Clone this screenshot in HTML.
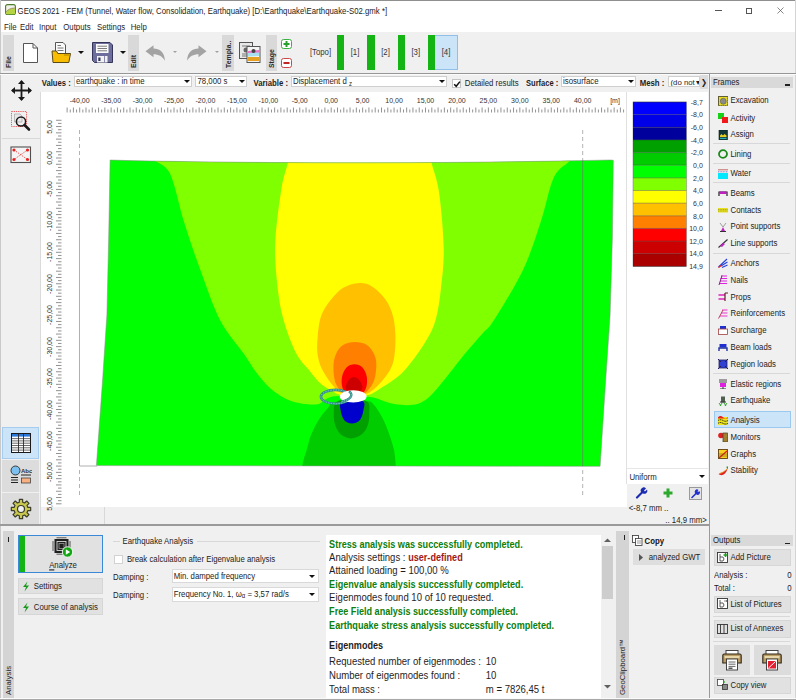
<!DOCTYPE html>
<html><head><meta charset="utf-8"><style>
*{box-sizing:border-box}
html,body{margin:0;padding:0}
body{width:796px;height:700px;overflow:hidden;position:relative;background:#f0f0f0;font-family:"Liberation Sans",sans-serif;font-size:7.8px;color:#1e1e1e}
.a{position:absolute}
.t{position:absolute;white-space:nowrap;line-height:10px;transform:scaleY(1.12)}
.b{font-weight:bold}
.tab{position:absolute;background:#d9d9d9}
.vt{position:absolute;white-space:nowrap;transform:rotate(-90deg);transform-origin:0 0;line-height:10px}
.combo{position:absolute;background:#fff;border:1px solid #cfcfcf}
.arr{position:absolute;width:0;height:0;border-left:3px solid transparent;border-right:3px solid transparent;border-top:3px solid #111}
.sep{position:absolute;height:1px;background:#d6d6d6}
.btn{position:absolute;background:#e1e1e1;border:1px solid #d8d8d8}
</style></head><body>
<div class="a" style="left:0px;top:0px;width:796px;height:32px;background:#fff;"></div>
<div class="a" style="left:0px;top:0px;width:796px;height:1px;background:#8f8f8f;"></div>
<div class="a" style="left:0px;top:0px;width:1px;height:700px;background:#c9c9c9;"></div>
<div class="a" style="left:795px;top:0px;width:1px;height:700px;background:#d4d4d4;"></div>
<svg class="a" style="left:4.8px;top:4.2px;" width="11" height="11" viewBox="0 0 11 11"><rect x="0.6" y="0.6" width="9.8" height="9.8" rx="2" fill="#f2f2ea" stroke="#4d7d2c" stroke-width="1.1"/><path d="M1 9.5V8C3 5.8 5 4.4 10 4.2V9.5Q10 10.2 9 10.2H2Q1 10.2 1 9.5Z" fill="#b4d444"/><path d="M1.2 7.8C3 5.6 5 4.2 9.8 4" fill="none" stroke="#8a6a40" stroke-width="0.7"/></svg>
<div class="t" style="left:17.6px;top:6.7px;font-size:7.8px;color:#222;">GEOS 2021 - FEM (Tunnel, Water flow, Consolidation, Earthquake) [D:\Earthquake\Earthquake-S02.gmk *]</div>
<div class="a" style="left:715px;top:10px;width:7px;height:1px;background:#555;"></div>
<div class="a" style="left:746px;top:7.5px;width:6px;height:6px;border:0.8px solid #555"></div>
<svg class="a" style="left:777px;top:7px;" width="7" height="7" viewBox="0 0 7 7"><path d="M0.5 0.5L6.5 6.5M6.5 0.5L0.5 6.5" stroke="#555" stroke-width="0.7"/></svg>
<div class="t" style="left:4px;top:22.7px;font-size:7.8px;">File</div>
<div class="t" style="left:20px;top:22.7px;font-size:7.8px;">Edit</div>
<div class="t" style="left:39px;top:22.7px;font-size:7.8px;">Input</div>
<div class="t" style="left:63.3px;top:22.7px;font-size:7.8px;">Outputs</div>
<div class="t" style="left:97px;top:22.7px;font-size:7.8px;">Settings</div>
<div class="t" style="left:130.7px;top:22.7px;font-size:7.8px;">Help</div>
<div class="a" style="left:0px;top:73px;width:796px;height:1px;background:#969696;"></div>
<div class="a" style="left:0px;top:74px;width:796px;height:1px;background:#fbfbfb;"></div>
<div class="a" style="left:2.6px;top:34.5px;width:11.4px;height:36px;background:#d9d9d9;"></div>
<div class="vt" style="left:4.100000000000001px;top:68px;font-size:6.9px;font-weight:bold;color:#2a2a2a">File</div>
<div class="a" style="left:128px;top:34.5px;width:11px;height:36px;background:#d9d9d9;"></div>
<div class="vt" style="left:129.3px;top:68px;font-size:6.9px;font-weight:bold;color:#2a2a2a">Edit</div>
<div class="a" style="left:222.2px;top:34.5px;width:11.400000000000006px;height:36px;background:#d9d9d9;"></div>
<div class="vt" style="left:223.7px;top:68px;font-size:6.9px;font-weight:bold;color:#2a2a2a">Templa..</div>
<div class="a" style="left:265.7px;top:34.5px;width:11.100000000000023px;height:36px;background:#d9d9d9;"></div>
<div class="vt" style="left:267.05px;top:68px;font-size:6.9px;font-weight:bold;color:#2a2a2a">Stage</div>
<svg class="a" style="left:22px;top:42px;" width="17" height="22" viewBox="0 0 17 22"><path d="M1.5 1.5H11L15.5 6V20.5H1.5Z" fill="#fff" stroke="#555" stroke-width="1"/><path d="M11 1.5V6H15.5" fill="none" stroke="#555" stroke-width="1"/></svg>
<svg class="a" style="left:51px;top:42px;" width="21" height="22" viewBox="0 0 21 22"><path d="M4.5 0.5H12L14.5 3V12H4.5Z" fill="#fafafa" stroke="#444" stroke-width="0.9"/><path d="M6.5 3.5H10M6.5 6H12.5M6.5 8.5H12.5" stroke="#555" stroke-width="0.8"/><path d="M1 9H5.5L6.8 11.5H19.5L17.8 20.5H2Z" fill="#f8bc00" stroke="#5a4a18" stroke-width="1"/><path d="M13 13H18" stroke="#a07800" stroke-width="0.8"/></svg>
<div class="a" style="left:78.4px;top:51.2px;width:0;height:0;border-left:3.0px solid transparent;border-right:3.0px solid transparent;border-top:3.0px solid #111"></div>
<svg class="a" style="left:92px;top:42px;" width="21" height="21" viewBox="0 0 21 21"><path d="M0.5 0.5H18L20.5 3V20.5H2.5L0.5 18.5Z" fill="#6e6e9c" stroke="#35355a" stroke-width="1"/><rect x="4" y="2" width="12.5" height="9" fill="#fbfbfb"/><path d="M5.5 4.2H15M5.5 6.5H15M5.5 8.8H15" stroke="#444" stroke-width="0.7"/><rect x="5" y="14" width="10.5" height="6.5" fill="#f2f2f2"/><rect x="6.3" y="15.5" width="2.2" height="3.5" fill="#35355a"/><path d="M12.5 14V20.5" stroke="#6e6e9c" stroke-width="0.8"/></svg>
<div class="a" style="left:119.5px;top:51.2px;width:0;height:0;border-left:3.0px solid transparent;border-right:3.0px solid transparent;border-top:3.0px solid #111"></div>
<svg class="a" style="left:145px;top:45px;" width="21" height="16" viewBox="0 0 21 16"><path d="M0.5 6.2L8.5 0.3V3.6C14.5 3.6 19.5 7 20 15.8C17.5 11.2 13.5 9.2 8.5 9.2V12.2Z" fill="#a3a3a3"/></svg>
<div class="a" style="left:173.1px;top:51.25px;width:0;height:0;border-left:2.5px solid transparent;border-right:2.5px solid transparent;border-top:2.5px solid #a0a0a0"></div>
<svg class="a" style="left:186px;top:45px;" width="21" height="16" viewBox="0 0 21 16"><path d="M20.5 6.2L12.5 0.3V3.6C6.5 3.6 1.5 7 1 15.8C3.5 11.2 7.5 9.2 12.5 9.2V12.2Z" fill="#a3a3a3"/></svg>
<div class="a" style="left:214.5px;top:51.25px;width:0;height:0;border-left:2.5px solid transparent;border-right:2.5px solid transparent;border-top:2.5px solid #a0a0a0"></div>
<svg class="a" style="left:239px;top:42px;" width="22" height="22" viewBox="0 0 22 22"><rect x="0.5" y="0.5" width="13" height="16" fill="#e8e8e8" stroke="#555"/><path d="M3 4H11M3 12H11M3 14H9" stroke="#777"/><circle cx="7" cy="8" r="2.5" fill="#666"/><rect x="8" y="4.5" width="13" height="16" fill="#f5f5f5" stroke="#555"/><path d="M9 9L20 8V12L9 13Z" fill="#e878c8"/><path d="M9 11L20 10.5V14L9 14.5Z" fill="#a8e0f0"/><rect x="9" y="15" width="11" height="4" fill="#e8a020"/><circle cx="14.5" cy="9" r="2" fill="#444"/></svg>
<svg class="a" style="left:280.5px;top:38.5px;" width="11" height="10" viewBox="0 0 11 10"><rect x="0.5" y="0.5" width="10" height="9" rx="2" fill="#fff" stroke="#3cb043" stroke-width="1"/><path d="M5.5 2V8M2.5 5H8.5" stroke="#28a030" stroke-width="2"/></svg>
<svg class="a" style="left:280.5px;top:57.5px;" width="11" height="10" viewBox="0 0 11 10"><rect x="0.5" y="0.5" width="10" height="9" rx="2" fill="#fff" stroke="#c84848" stroke-width="1"/><path d="M2.5 5H8.5" stroke="#c02828" stroke-width="2"/></svg>
<div class="t" style="left:220.5px;width:200px;text-align:center;top:48.300000000000004px;font-size:7.8px;color:#333">[Topo]</div>
<div class="a" style="left:336.8px;top:35px;width:7.5px;height:35px;background:#14b414;"></div>
<div class="t" style="left:255px;width:200px;text-align:center;top:48.300000000000004px;font-size:7.8px;color:#333">[1]</div>
<div class="a" style="left:367px;top:35px;width:7.5px;height:35px;background:#14b414;"></div>
<div class="t" style="left:285.5px;width:200px;text-align:center;top:48.300000000000004px;font-size:7.8px;color:#333">[2]</div>
<div class="a" style="left:397.5px;top:35px;width:7.5px;height:35px;background:#14b414;"></div>
<div class="t" style="left:315.8px;width:200px;text-align:center;top:48.300000000000004px;font-size:7.8px;color:#333">[3]</div>
<div class="a" style="left:434.8px;top:35px;width:23.2px;height:35px;background:#cce4f7;border:1px solid #90c0e8;border-left:none"></div>
<div class="a" style="left:427.5px;top:35px;width:7.5px;height:35px;background:#14b414;"></div>
<div class="t" style="left:346px;width:200px;text-align:center;top:48.300000000000004px;font-size:7.8px;color:#333">[4]</div>
<div class="a" style="left:40px;top:92px;width:1px;height:433px;background:#dadada;"></div>
<svg class="a" style="left:11px;top:80px;" width="21" height="21" viewBox="0 0 21 21"><path d="M10.5 1V20M1 10.5H20" stroke="#1a1a1a" stroke-width="1.8"/><path d="M10.5 0L7 4H14ZM10.5 21L7 17H14ZM0 10.5L4 7V14ZM21 10.5L17 7V14Z" fill="#1a1a1a"/></svg>
<svg class="a" style="left:10px;top:110px;" width="22" height="22" viewBox="0 0 22 22"><rect x="1.5" y="1.5" width="15" height="15" fill="none" stroke="#f06060" stroke-width="1" stroke-dasharray="1.3 0.9"/><path d="M4.5 4H10L12 6V12H4.5Z" fill="#e8e8e8" stroke="#999" stroke-width="0.6"/><circle cx="11" cy="11.5" r="4.6" fill="none" stroke="#1a1a1a" stroke-width="1.5"/><path d="M14.5 15L19 19.5" stroke="#1a1a1a" stroke-width="2.6" stroke-linecap="round"/></svg>
<div class="a" style="left:2px;top:137.5px;width:38px;height:1px;background:#d8d8d8;"></div>
<svg class="a" style="left:10px;top:146px;" width="22" height="18" viewBox="0 0 22 18"><rect x="1" y="1" width="19.5" height="15.5" fill="#f4f4f4" stroke="#505050" stroke-width="1.1"/><path d="M4 4L17.5 13.5M17.5 4L4 13.5" stroke="#e83030" stroke-width="0.9" stroke-dasharray="1.2 1.2"/><circle cx="4" cy="4" r="1.6" fill="#e82020"/><circle cx="17.5" cy="4" r="1.6" fill="#e82020"/><circle cx="4" cy="13.5" r="1.6" fill="#e82020"/><circle cx="17.5" cy="13.5" r="1.6" fill="#e82020"/></svg>
<div class="a" style="left:2.4px;top:427px;width:37px;height:31.5px;background:#cce4f7;border:1px solid #a6cdef"></div>
<svg class="a" style="left:11px;top:433px;" width="20" height="20" viewBox="0 0 20 20"><rect x="0.5" y="0.5" width="19" height="19" fill="#fff" stroke="#1a1a1a"/><rect x="1" y="1" width="18" height="2.6" fill="#2a78d8"/><path d="M1 5.6H19M1 7.9H19M1 10.2H19M1 12.5H19M1 14.8H19M1 17.1H19" stroke="#2a2a2a" stroke-width="0.7"/><path d="M7.5 1V19M12.5 1V19" stroke="#2a2a2a" stroke-width="0.9"/></svg>
<div class="a" style="left:2.4px;top:460px;width:37px;height:31.5px;background:#dcdcdc;"></div>
<svg class="a" style="left:10px;top:465px;" width="22" height="22" viewBox="0 0 22 22"><circle cx="5.5" cy="5.5" r="4.5" fill="#7cc0f0" stroke="#2a2a2a" stroke-width="0.9"/><text x="11" y="8" font-size="6" font-family="Liberation Sans" font-weight="bold" fill="#333">Abc</text><path d="M11 10H21M1 12.5H8M1 15H8M1 17.5H8" stroke="#222" stroke-width="1.2"/><rect x="11.5" y="13" width="9" height="5" fill="#f8b080" stroke="#444" stroke-width="0.8"/></svg>
<div class="a" style="left:2.4px;top:493px;width:37px;height:31.5px;background:#dcdcdc;"></div>
<svg class="a" style="left:10px;top:498px;" width="22" height="22" viewBox="0 0 22 22"><polygon points="9.31,4.21 9.39,1.33 12.61,1.33 12.69,4.21 14.61,5.00 16.70,3.03 18.97,5.30 17.00,7.39 17.79,9.31 20.67,9.39 20.67,12.61 17.79,12.69 17.00,14.61 18.97,16.70 16.70,18.97 14.61,17.00 12.69,17.79 12.61,20.67 9.39,20.67 9.31,17.79 7.39,17.00 5.30,18.97 3.03,16.70 5.00,14.61 4.21,12.69 1.33,12.61 1.33,9.39 4.21,9.31 5.00,7.39 3.03,5.30 5.30,3.03 7.39,5.00" fill="#c9c84e" stroke="#3c3c2c" stroke-width="1.2" stroke-linejoin="round"/><circle cx="11" cy="11" r="3.5" fill="#f0f0f0" stroke="#3c3c2c" stroke-width="1.2"/></svg>
<div class="t" style="left:41.7px;top:79.4px;font-size:7.7px;font-weight:bold;">Values :</div>
<div class="combo" style="left:74px;top:76px;width:118px;height:11px"></div>
<div class="t" style="left:76px;top:77.4px;font-size:7.8px;">earthquake : in time</div>
<div class="a" style="left:184.0px;top:80.0px;width:0;height:0;border-left:3.0px solid transparent;border-right:3.0px solid transparent;border-top:3.0px solid #111"></div>
<div class="combo" style="left:195.4px;top:76px;width:52px;height:11px"></div>
<div class="t" style="left:197.5px;top:77.4px;font-size:7.8px;">78,000 s</div>
<div class="a" style="left:239.0px;top:80.0px;width:0;height:0;border-left:3.0px solid transparent;border-right:3.0px solid transparent;border-top:3.0px solid #111"></div>
<div class="t" style="left:253.5px;top:79.4px;font-size:7.75px;font-weight:bold;">Variable :</div>
<div class="combo" style="left:291px;top:76px;width:156px;height:11px"></div>
<div class="t" style="left:293px;top:77.4px;font-size:7.8px;">Displacement d <span style="font-size:6px;position:relative;top:1.5px">z</span></div>
<div class="a" style="left:439.0px;top:80.0px;width:0;height:0;border-left:3.0px solid transparent;border-right:3.0px solid transparent;border-top:3.0px solid #111"></div>
<div class="a" style="left:451.7px;top:78.8px;width:9.5px;height:9.5px;background:#fff;border:1px solid #c4c4c4"></div>
<svg class="a" style="left:452.5px;top:79.5px;" width="8" height="8" viewBox="0 0 8 8"><path d="M1.2 4.2L3.2 6.3L6.9 1.6" fill="none" stroke="#111" stroke-width="1.5"/></svg>
<div class="t" style="left:464.8px;top:79.3px;font-size:7.8px;">Detailed results</div>
<div class="t" style="left:526px;top:79.4px;font-size:7.55px;font-weight:bold;">Surface :</div>
<div class="combo" style="left:561px;top:76px;width:75px;height:11px"></div>
<div class="t" style="left:563px;top:77.4px;font-size:7.8px;">isosurface</div>
<div class="a" style="left:627.7px;top:80.0px;width:0;height:0;border-left:3.0px solid transparent;border-right:3.0px solid transparent;border-top:3.0px solid #111"></div>
<div class="t" style="left:639.7px;top:79.4px;font-size:7.8px;font-weight:bold;">Mesh :</div>
<div class="combo" style="left:668px;top:76px;width:32px;height:11px;overflow:hidden"><span style="position:absolute;left:1.5px;top:0.5px;line-height:10px;white-space:nowrap">(do not</span><span style="position:absolute;left:27px;top:0.5px;line-height:10px;">▾</span></div>
<div class="a" style="left:699.5px;top:75px;width:8px;height:14px;background:#dcdcdc;"></div>
<div class="t" style="left:701px;top:77.7px;font-size:7.5px;">❯</div>
<div class="a" style="left:41px;top:92px;width:586px;height:414.5px;background:#fff;"></div>
<div class="a" style="left:103.5px;top:506.5px;width:1px;height:18px;background:#d8d8d8;"></div>
<div class="t" style="left:-20.30000000000001px;width:200px;text-align:center;top:95.7px;font-size:7.0px;color:#333">-40,00</div>
<div class="t" style="left:11.137499999999989px;width:200px;text-align:center;top:95.7px;font-size:7.0px;color:#333">-35,00</div>
<div class="t" style="left:42.57499999999999px;width:200px;text-align:center;top:95.7px;font-size:7.0px;color:#333">-30,00</div>
<div class="t" style="left:74.01249999999999px;width:200px;text-align:center;top:95.7px;font-size:7.0px;color:#333">-25,00</div>
<div class="t" style="left:105.44999999999999px;width:200px;text-align:center;top:95.7px;font-size:7.0px;color:#333">-20,00</div>
<div class="t" style="left:136.8875px;width:200px;text-align:center;top:95.7px;font-size:7.0px;color:#333">-15,00</div>
<div class="t" style="left:168.325px;width:200px;text-align:center;top:95.7px;font-size:7.0px;color:#333">-10,00</div>
<div class="t" style="left:199.7625px;width:200px;text-align:center;top:95.7px;font-size:7.0px;color:#333">-5,00</div>
<div class="t" style="left:231.2px;width:200px;text-align:center;top:95.7px;font-size:7.0px;color:#333">0,00</div>
<div class="t" style="left:262.6375px;width:200px;text-align:center;top:95.7px;font-size:7.0px;color:#333">5,00</div>
<div class="t" style="left:294.075px;width:200px;text-align:center;top:95.7px;font-size:7.0px;color:#333">10,00</div>
<div class="t" style="left:325.5125px;width:200px;text-align:center;top:95.7px;font-size:7.0px;color:#333">15,00</div>
<div class="t" style="left:356.95px;width:200px;text-align:center;top:95.7px;font-size:7.0px;color:#333">20,00</div>
<div class="t" style="left:388.3875px;width:200px;text-align:center;top:95.7px;font-size:7.0px;color:#333">25,00</div>
<div class="t" style="left:419.82500000000005px;width:200px;text-align:center;top:95.7px;font-size:7.0px;color:#333">30,00</div>
<div class="t" style="left:451.26250000000005px;width:200px;text-align:center;top:95.7px;font-size:7.0px;color:#333">35,00</div>
<div class="t" style="left:482.70000000000005px;width:200px;text-align:center;top:95.7px;font-size:7.0px;color:#333">40,00</div>
<div class="t" style="left:515px;width:200px;text-align:center;top:95.7px;font-size:7.0px;color:#333">[m]</div>
<svg class="a" style="left:0px;top:0px;pointer-events:none" width="640" height="120" viewBox="0 0 640 120"><path d="M67.12 107.5V112.5 M70.27 109.5V112.5 M73.41 107.5V112.5 M76.56 109.5V112.5 M79.70 107.5V112.5 M82.84 109.5V112.5 M85.99 107.5V112.5 M89.13 109.5V112.5 M92.28 107.5V112.5 M95.42 109.5V112.5 M98.56 107.5V112.5 M101.71 109.5V112.5 M104.85 107.5V112.5 M107.99 109.5V112.5 M111.14 107.5V112.5 M114.28 109.5V112.5 M117.43 107.5V112.5 M120.57 109.5V112.5 M123.71 107.5V112.5 M126.86 109.5V112.5 M130.00 107.5V112.5 M133.14 109.5V112.5 M136.29 107.5V112.5 M139.43 109.5V112.5 M142.57 107.5V112.5 M145.72 109.5V112.5 M148.86 107.5V112.5 M152.01 109.5V112.5 M155.15 107.5V112.5 M158.29 109.5V112.5 M161.44 107.5V112.5 M164.58 109.5V112.5 M167.72 107.5V112.5 M170.87 109.5V112.5 M174.01 107.5V112.5 M177.16 109.5V112.5 M180.30 107.5V112.5 M183.44 109.5V112.5 M186.59 107.5V112.5 M189.73 109.5V112.5 M192.88 107.5V112.5 M196.02 109.5V112.5 M199.16 107.5V112.5 M202.31 109.5V112.5 M205.45 107.5V112.5 M208.59 109.5V112.5 M211.74 107.5V112.5 M214.88 109.5V112.5 M218.02 107.5V112.5 M221.17 109.5V112.5 M224.31 107.5V112.5 M227.46 109.5V112.5 M230.60 107.5V112.5 M233.74 109.5V112.5 M236.89 107.5V112.5 M240.03 109.5V112.5 M243.18 107.5V112.5 M246.32 109.5V112.5 M249.46 107.5V112.5 M252.61 109.5V112.5 M255.75 107.5V112.5 M258.89 109.5V112.5 M262.04 107.5V112.5 M265.18 109.5V112.5 M268.32 107.5V112.5 M271.47 109.5V112.5 M274.61 107.5V112.5 M277.76 109.5V112.5 M280.90 107.5V112.5 M284.04 109.5V112.5 M287.19 107.5V112.5 M290.33 109.5V112.5 M293.48 107.5V112.5 M296.62 109.5V112.5 M299.76 107.5V112.5 M302.91 109.5V112.5 M306.05 107.5V112.5 M309.19 109.5V112.5 M312.34 107.5V112.5 M315.48 109.5V112.5 M318.62 107.5V112.5 M321.77 109.5V112.5 M324.91 107.5V112.5 M328.06 109.5V112.5 M331.20 107.5V112.5 M334.34 109.5V112.5 M337.49 107.5V112.5 M340.63 109.5V112.5 M343.77 107.5V112.5 M346.92 109.5V112.5 M350.06 107.5V112.5 M353.21 109.5V112.5 M356.35 107.5V112.5 M359.49 109.5V112.5 M362.64 107.5V112.5 M365.78 109.5V112.5 M368.92 107.5V112.5 M372.07 109.5V112.5 M375.21 107.5V112.5 M378.36 109.5V112.5 M381.50 107.5V112.5 M384.64 109.5V112.5 M387.79 107.5V112.5 M390.93 109.5V112.5 M394.07 107.5V112.5 M397.22 109.5V112.5 M400.36 107.5V112.5 M403.51 109.5V112.5 M406.65 107.5V112.5 M409.79 109.5V112.5 M412.94 107.5V112.5 M416.08 109.5V112.5 M419.22 107.5V112.5 M422.37 109.5V112.5 M425.51 107.5V112.5 M428.66 109.5V112.5 M431.80 107.5V112.5 M434.94 109.5V112.5 M438.09 107.5V112.5 M441.23 109.5V112.5 M444.38 107.5V112.5 M447.52 109.5V112.5 M450.66 107.5V112.5 M453.81 109.5V112.5 M456.95 107.5V112.5 M460.09 109.5V112.5 M463.24 107.5V112.5 M466.38 109.5V112.5 M469.52 107.5V112.5 M472.67 109.5V112.5 M475.81 107.5V112.5 M478.96 109.5V112.5 M482.10 107.5V112.5 M485.24 109.5V112.5 M488.39 107.5V112.5 M491.53 109.5V112.5 M494.67 107.5V112.5 M497.82 109.5V112.5 M500.96 107.5V112.5 M504.11 109.5V112.5 M507.25 107.5V112.5 M510.39 109.5V112.5 M513.54 107.5V112.5 M516.68 109.5V112.5 M519.83 107.5V112.5 M522.97 109.5V112.5 M526.11 107.5V112.5 M529.26 109.5V112.5 M532.40 107.5V112.5 M535.54 109.5V112.5 M538.69 107.5V112.5 M541.83 109.5V112.5 M544.97 107.5V112.5 M548.12 109.5V112.5 M551.26 107.5V112.5 M554.41 109.5V112.5 M557.55 107.5V112.5 M560.69 109.5V112.5 M563.84 107.5V112.5 M566.98 109.5V112.5 M570.12 107.5V112.5 M573.27 109.5V112.5 M576.41 107.5V112.5 M579.56 109.5V112.5 M582.70 107.5V112.5 M585.84 109.5V112.5 M588.99 107.5V112.5 M592.13 109.5V112.5 M595.27 107.5V112.5 M598.42 109.5V112.5 M601.56 107.5V112.5 M604.71 109.5V112.5 M607.85 107.5V112.5 M610.99 109.5V112.5 M614.14 107.5V112.5 M617.28 109.5V112.5 M620.42 107.5V112.5 M623.57 109.5V112.5" stroke="#777" stroke-width="0.8"/></svg>
<div class="t" style="left:20px;top:121.5625px;width:60px;text-align:center;font-size:7px;color:#333;transform:rotate(-90deg)">5,00</div>
<div class="t" style="left:20px;top:153.0px;width:60px;text-align:center;font-size:7px;color:#333;transform:rotate(-90deg)">0,00</div>
<div class="t" style="left:20px;top:184.4375px;width:60px;text-align:center;font-size:7px;color:#333;transform:rotate(-90deg)">-5,00</div>
<div class="t" style="left:20px;top:215.875px;width:60px;text-align:center;font-size:7px;color:#333;transform:rotate(-90deg)">-10,00</div>
<div class="t" style="left:20px;top:247.3125px;width:60px;text-align:center;font-size:7px;color:#333;transform:rotate(-90deg)">-15,00</div>
<div class="t" style="left:20px;top:278.75px;width:60px;text-align:center;font-size:7px;color:#333;transform:rotate(-90deg)">-20,00</div>
<div class="t" style="left:20px;top:310.1875px;width:60px;text-align:center;font-size:7px;color:#333;transform:rotate(-90deg)">-25,00</div>
<div class="t" style="left:20px;top:341.625px;width:60px;text-align:center;font-size:7px;color:#333;transform:rotate(-90deg)">-30,00</div>
<div class="t" style="left:20px;top:373.0625px;width:60px;text-align:center;font-size:7px;color:#333;transform:rotate(-90deg)">-35,00</div>
<div class="t" style="left:20px;top:404.5px;width:60px;text-align:center;font-size:7px;color:#333;transform:rotate(-90deg)">-40,00</div>
<div class="t" style="left:20px;top:435.9375px;width:60px;text-align:center;font-size:7px;color:#333;transform:rotate(-90deg)">-45,00</div>
<div class="t" style="left:20px;top:467.375px;width:60px;text-align:center;font-size:7px;color:#333;transform:rotate(-90deg)">-50,00</div>
<div class="t" style="left:20px;top:498.8125px;width:60px;text-align:center;font-size:7px;color:#333;transform:rotate(-90deg)">5,00</div>
<svg class="a" style="left:0px;top:0px;" width="70" height="520" viewBox="0 0 70 520"><path d="M56 120.28H61.5 M58 123.42H61.5 M56 126.56H61.5 M58 129.71H61.5 M56 132.85H61.5 M58 135.99H61.5 M56 139.14H61.5 M58 142.28H61.5 M56 145.43H61.5 M58 148.57H61.5 M56 151.71H61.5 M58 154.86H61.5 M56 158.00H61.5 M58 161.14H61.5 M56 164.29H61.5 M58 167.43H61.5 M56 170.57H61.5 M58 173.72H61.5 M56 176.86H61.5 M58 180.01H61.5 M56 183.15H61.5 M58 186.29H61.5 M56 189.44H61.5 M58 192.58H61.5 M56 195.72H61.5 M58 198.87H61.5 M56 202.01H61.5 M58 205.16H61.5 M56 208.30H61.5 M58 211.44H61.5 M56 214.59H61.5 M58 217.73H61.5 M56 220.88H61.5 M58 224.02H61.5 M56 227.16H61.5 M58 230.31H61.5 M56 233.45H61.5 M58 236.59H61.5 M56 239.74H61.5 M58 242.88H61.5 M56 246.02H61.5 M58 249.17H61.5 M56 252.31H61.5 M58 255.46H61.5 M56 258.60H61.5 M58 261.74H61.5 M56 264.89H61.5 M58 268.03H61.5 M56 271.18H61.5 M58 274.32H61.5 M56 277.46H61.5 M58 280.61H61.5 M56 283.75H61.5 M58 286.89H61.5 M56 290.04H61.5 M58 293.18H61.5 M56 296.32H61.5 M58 299.47H61.5 M56 302.61H61.5 M58 305.76H61.5 M56 308.90H61.5 M58 312.04H61.5 M56 315.19H61.5 M58 318.33H61.5 M56 321.48H61.5 M58 324.62H61.5 M56 327.76H61.5 M58 330.91H61.5 M56 334.05H61.5 M58 337.19H61.5 M56 340.34H61.5 M58 343.48H61.5 M56 346.62H61.5 M58 349.77H61.5 M56 352.91H61.5 M58 356.06H61.5 M56 359.20H61.5 M58 362.34H61.5 M56 365.49H61.5 M58 368.63H61.5 M56 371.77H61.5 M58 374.92H61.5 M56 378.06H61.5 M58 381.21H61.5 M56 384.35H61.5 M58 387.49H61.5 M56 390.64H61.5 M58 393.78H61.5 M56 396.92H61.5 M58 400.07H61.5 M56 403.21H61.5 M58 406.36H61.5 M56 409.50H61.5 M58 412.64H61.5 M56 415.79H61.5 M58 418.93H61.5 M56 422.07H61.5 M58 425.22H61.5 M56 428.36H61.5 M58 431.51H61.5 M56 434.65H61.5 M58 437.79H61.5 M56 440.94H61.5 M58 444.08H61.5 M56 447.22H61.5 M58 450.37H61.5 M56 453.51H61.5 M58 456.66H61.5 M56 459.80H61.5 M58 462.94H61.5 M56 466.09H61.5 M58 469.23H61.5 M56 472.38H61.5 M58 475.52H61.5 M56 478.66H61.5 M58 481.81H61.5 M56 484.95H61.5 M58 488.09H61.5 M56 491.24H61.5 M58 494.38H61.5 M56 497.52H61.5 M58 500.67H61.5 M56 503.81H61.5" stroke="#777" stroke-width="0.8"/></svg>
<svg class="a" style="left:0px;top:0px;" width="640" height="520" viewBox="0 0 640 520"><defs><clipPath id="cm"><path d="M110.10 160.00 L130.00 160.62 L150.00 160.99 L170.00 161.33 L190.00 161.63 L210.00 161.89 L230.00 162.13 L250.00 162.33 L270.00 162.49 L290.00 162.62 L310.00 162.71 L330.00 162.77 L350.00 162.80 L370.00 162.79 L390.00 162.75 L410.00 162.67 L430.00 162.56 L450.00 162.41 L470.00 162.23 L490.00 162.02 L510.00 161.77 L530.00 161.48 L550.00 161.16 L570.00 160.81 L590.00 160.42 L610.00 160.00 L613.30 160.20 L612.40 237.00 L610.10 315.00 L605.50 383.00 L600.10 466.30 L96.40 465.60 L102.40 383.00 L106.90 315.00 L108.70 237.00Z"/></clipPath></defs><path d="M110.10 160.00 L130.00 160.62 L150.00 160.99 L170.00 161.33 L190.00 161.63 L210.00 161.89 L230.00 162.13 L250.00 162.33 L270.00 162.49 L290.00 162.62 L310.00 162.71 L330.00 162.77 L350.00 162.80 L370.00 162.79 L390.00 162.75 L410.00 162.67 L430.00 162.56 L450.00 162.41 L470.00 162.23 L490.00 162.02 L510.00 161.77 L530.00 161.48 L550.00 161.16 L570.00 160.81 L590.00 160.42 L610.00 160.00 L613.30 160.20 L612.40 237.00 L610.10 315.00 L605.50 383.00 L600.10 466.30 L96.40 465.60 L102.40 383.00 L106.90 315.00 L108.70 237.00Z" fill="#00ff00"/><g clip-path="url(#cm)"><path d="M154.40 150.00C85.07 151.67 151.80 156.07 154.40 160.00C157.00 163.93 165.07 163.27 170.00 173.60C174.93 183.93 179.00 206.10 184.00 222.00C189.00 237.90 194.00 252.67 200.00 269.00C206.00 285.33 212.67 305.83 220.00 320.00C227.33 334.17 238.00 345.33 244.00 354.00C250.00 362.67 251.50 366.17 256.00 372.00C260.50 377.83 265.17 384.17 271.00 389.00C276.83 393.83 283.50 398.42 291.00 401.00C298.50 403.58 309.83 405.00 316.00 404.50C322.17 404.00 324.00 399.42 328.00 398.00C332.00 396.58 333.00 396.17 340.00 396.00C347.00 395.83 361.33 395.75 370.00 397.00C378.67 398.25 384.83 402.20 392.00 403.50C399.17 404.80 407.00 405.72 413.00 404.80C419.00 403.88 422.67 402.30 428.00 398.00C433.33 393.70 438.75 386.50 445.00 379.00C451.25 371.50 459.17 360.67 465.50 353.00C471.83 345.33 478.25 338.50 483.00 333.00C487.75 327.50 487.33 330.50 494.00 320.00C500.67 309.50 515.17 286.50 523.00 270.00C530.83 253.50 535.83 236.50 541.00 221.00C546.17 205.50 549.10 187.17 554.00 177.00C558.90 166.83 567.67 164.50 570.40 160.00C573.13 155.50 639.73 151.67 570.40 150.00C501.07 148.33 223.73 148.33 154.40 150.00Z" fill="#80ff00"/><path d="M288.00 150.00C264.12 152.00 289.07 155.72 288.00 162.00C286.93 168.28 283.72 174.53 281.60 187.70C279.48 200.87 276.07 225.28 275.30 241.00C274.53 256.72 275.72 269.17 277.00 282.00C278.28 294.83 279.83 306.17 283.00 318.00C286.17 329.83 291.67 344.33 296.00 353.00C300.33 361.67 305.00 365.00 309.00 370.00C313.00 375.00 316.17 379.50 320.00 383.00C323.83 386.50 328.33 389.00 332.00 391.00C335.67 393.00 336.33 394.23 342.00 395.00C347.67 395.77 359.50 396.77 366.00 395.60C372.50 394.43 374.83 391.93 381.00 388.00C387.17 384.07 395.72 379.50 403.00 372.00C410.28 364.50 419.27 351.67 424.70 343.00C430.13 334.33 432.88 329.17 435.60 320.00C438.32 310.83 439.65 300.00 441.00 288.00C442.35 276.00 444.03 264.00 443.70 248.00C443.37 232.00 441.07 206.42 439.00 192.00C436.93 177.58 432.58 168.50 431.30 161.50C430.02 154.50 455.18 151.92 431.30 150.00C407.42 148.08 311.88 148.00 288.00 150.00Z" fill="#ffff00"/><path d="M366.30 283.80C372.28 285.52 378.65 291.48 382.90 296.20C387.15 300.92 389.73 306.10 391.80 312.10C393.87 318.10 394.85 325.05 395.30 332.20C395.75 339.35 395.38 348.70 394.50 355.00C393.62 361.30 392.92 364.75 390.00 370.00C387.08 375.25 381.00 382.50 377.00 386.50C373.00 390.50 370.17 392.25 366.00 394.00C361.83 395.75 356.67 397.50 352.00 397.00C347.33 396.50 342.67 395.03 338.00 391.00C333.33 386.97 327.33 378.47 324.00 372.80C320.67 367.13 319.08 362.63 318.00 357.00C316.92 351.37 316.92 346.00 317.50 339.00C318.08 332.00 318.78 322.13 321.50 315.00C324.22 307.87 329.55 301.05 333.80 296.20C338.05 291.35 341.58 287.97 347.00 285.90C352.42 283.83 360.32 282.08 366.30 283.80Z" fill="#ffc000"/><path d="M355.00 342.00C359.00 342.00 363.75 342.83 367.00 345.00C370.25 347.17 372.95 351.33 374.50 355.00C376.05 358.67 376.55 362.33 376.30 367.00C376.05 371.67 375.38 378.33 373.00 383.00C370.62 387.67 366.50 393.00 362.00 395.00C357.50 397.00 350.33 396.83 346.00 395.00C341.67 393.17 338.10 388.67 336.00 384.00C333.90 379.33 333.40 372.00 333.40 367.00C333.40 362.00 334.40 357.67 336.00 354.00C337.60 350.33 339.83 347.00 343.00 345.00C346.17 343.00 351.00 342.00 355.00 342.00Z" fill="#ff8000"/><path d="M354.50 364.30C357.17 364.30 360.45 365.38 362.50 367.50C364.55 369.62 366.22 373.58 366.80 377.00C367.38 380.42 367.13 385.00 366.00 388.00C364.87 391.00 363.00 393.83 360.00 395.00C357.00 396.17 350.92 396.17 348.00 395.00C345.08 393.83 343.50 391.00 342.50 388.00C341.50 385.00 341.33 380.42 342.00 377.00C342.67 373.58 344.42 369.62 346.50 367.50C348.58 365.38 351.83 364.30 354.50 364.30Z" fill="#ff0000"/><path d="M354.00 377.00C356.00 377.00 358.67 379.00 360.00 381.00C361.33 383.00 363.00 386.83 362.00 389.00C361.00 391.17 356.67 394.00 354.00 394.00C351.33 394.00 347.00 391.17 346.00 389.00C345.00 386.83 346.67 383.00 348.00 381.00C349.33 379.00 352.00 377.00 354.00 377.00Z" fill="#cc0000"/><path d="M301.00 472.00C301.33 470.33 302.07 465.67 303.00 462.00C303.93 458.33 305.27 454.50 306.60 450.00C307.93 445.50 309.00 440.00 311.00 435.00C313.00 430.00 315.93 424.33 318.60 420.00C321.27 415.67 324.10 412.00 327.00 409.00C329.90 406.00 329.50 403.33 336.00 402.00C342.50 400.67 359.58 400.42 366.00 401.00C372.42 401.58 371.58 402.33 374.50 405.50C377.42 408.67 381.00 415.08 383.50 420.00C386.00 424.92 387.75 430.00 389.50 435.00C391.25 440.00 393.00 445.50 394.00 450.00C395.00 454.50 395.17 458.33 395.50 462.00C395.83 465.67 395.92 470.33 396.00 472.00Z" fill="#00cc00"/><path d="M351.00 438.40C354.42 438.40 358.75 436.57 361.50 434.50C364.25 432.43 366.20 429.42 367.50 426.00C368.80 422.58 369.55 418.17 369.30 414.00C369.05 409.83 371.22 403.17 366.00 401.00C360.78 398.83 343.37 398.83 338.00 401.00C332.63 403.17 334.22 409.83 333.80 414.00C333.38 418.17 334.30 422.58 335.50 426.00C336.70 429.42 338.42 432.43 341.00 434.50C343.58 436.57 347.58 438.40 351.00 438.40Z" fill="#00a000"/><path d="M352.00 423.50C354.50 423.50 357.62 422.58 359.50 420.50C361.38 418.42 362.80 414.25 363.30 411.00C363.80 407.75 366.05 402.67 362.50 401.00C358.95 399.33 345.62 399.33 342.00 401.00C338.38 402.67 340.38 407.75 340.80 411.00C341.22 414.25 342.63 418.42 344.50 420.50C346.37 422.58 349.50 423.50 352.00 423.50Z" fill="#0000cc"/></g><path d="M110.10 160.00 L130.00 160.62 L150.00 160.99 L170.00 161.33 L190.00 161.63 L210.00 161.89 L230.00 162.13 L250.00 162.33 L270.00 162.49 L290.00 162.62 L310.00 162.71 L330.00 162.77 L350.00 162.80 L370.00 162.79 L390.00 162.75 L410.00 162.67 L430.00 162.56 L450.00 162.41 L470.00 162.23 L490.00 162.02 L510.00 161.77 L530.00 161.48 L550.00 161.16 L570.00 160.81 L590.00 160.42 L610.00 160.00 L613.30 160.20 L612.40 237.00 L610.10 315.00 L605.50 383.00 L600.10 466.30 L96.40 465.60 L102.40 383.00 L106.90 315.00 L108.70 237.00Z" fill="none" stroke="#8a8a8a" stroke-width="0.5"/><path d="M79.5 158V466H97" fill="none" stroke="#b0b0b0" stroke-width="1"/><path d="M582.7 160V466.2" fill="none" stroke="#6a7a6a" stroke-width="0.7"/><path d="M79.5 130V158M79.5 470V496M582.7 130V160M582.7 470V496" fill="none" stroke="#aaaaaa" stroke-width="0.9" stroke-dasharray="4 3"/><ellipse cx="335.5" cy="396.8" rx="14.6" ry="6.9" fill="none" stroke="#34908e" stroke-width="2.6"/><ellipse cx="335.5" cy="396.8" rx="14.6" ry="6.9" fill="none" stroke="#8acfc8" stroke-width="0.9" stroke-dasharray="1.4 1.2"/><ellipse cx="353.2" cy="396.4" rx="13.4" ry="6.2" fill="#fff"/><path d="M341.5 401.5A14.6 6.9 0 0 0 349 391.3" fill="none" stroke="#34908e" stroke-width="2.4"/><path d="M341.5 401.5A14.6 6.9 0 0 0 349 391.3" fill="none" stroke="#a8e0d8" stroke-width="0.8" stroke-dasharray="1.2 1.2"/></svg>
<div class="a" style="left:626.5px;top:91.5px;width:81.5px;height:377px;background:#fff;"></div>
<div class="a" style="left:626px;top:91.5px;width:1px;height:392px;background:#e0e0e0;"></div>
<div class="a" style="left:626.5px;top:468px;width:81.5px;height:1px;background:#e6e6e6;"></div>
<svg class="a" style="left:0px;top:0px;" width="720" height="300" viewBox="0 0 720 300"><rect x="633" y="102.00" width="53.4" height="12.65" fill="#0000ff"/><rect x="633" y="114.65" width="53.4" height="12.65" fill="#0000e8"/><rect x="633" y="127.29" width="53.4" height="12.65" fill="#00009c"/><rect x="633" y="139.94" width="53.4" height="12.65" fill="#00a000"/><rect x="633" y="152.58" width="53.4" height="12.65" fill="#00cc00"/><rect x="633" y="165.23" width="53.4" height="12.65" fill="#00ff00"/><rect x="633" y="177.88" width="53.4" height="12.65" fill="#80ff00"/><rect x="633" y="190.52" width="53.4" height="12.65" fill="#ffff00"/><rect x="633" y="203.17" width="53.4" height="12.65" fill="#ffc000"/><rect x="633" y="215.82" width="53.4" height="12.65" fill="#ff8000"/><rect x="633" y="228.46" width="53.4" height="12.65" fill="#ff0000"/><rect x="633" y="241.11" width="53.4" height="12.65" fill="#cc0000"/><rect x="633" y="253.75" width="53.4" height="12.65" fill="#aa0000"/><path d="M633 102.00H686.4" stroke="#333" stroke-opacity="0.55" stroke-width="0.7"/><path d="M633 114.65H686.4" stroke="#333" stroke-opacity="0.55" stroke-width="0.7"/><path d="M633 127.29H686.4" stroke="#333" stroke-opacity="0.55" stroke-width="0.7"/><path d="M633 139.94H686.4" stroke="#333" stroke-opacity="0.55" stroke-width="0.7"/><path d="M633 152.58H686.4" stroke="#333" stroke-opacity="0.55" stroke-width="0.7"/><path d="M633 165.23H686.4" stroke="#333" stroke-opacity="0.55" stroke-width="0.7"/><path d="M633 177.88H686.4" stroke="#333" stroke-opacity="0.55" stroke-width="0.7"/><path d="M633 190.52H686.4" stroke="#333" stroke-opacity="0.55" stroke-width="0.7"/><path d="M633 203.17H686.4" stroke="#333" stroke-opacity="0.55" stroke-width="0.7"/><path d="M633 215.82H686.4" stroke="#333" stroke-opacity="0.55" stroke-width="0.7"/><path d="M633 228.46H686.4" stroke="#333" stroke-opacity="0.55" stroke-width="0.7"/><path d="M633 241.11H686.4" stroke="#333" stroke-opacity="0.55" stroke-width="0.7"/><path d="M633 253.75H686.4" stroke="#333" stroke-opacity="0.55" stroke-width="0.7"/><path d="M633 266.40H686.4" stroke="#333" stroke-opacity="0.55" stroke-width="0.7"/><rect x="633" y="102.0" width="53.4" height="164.39999999999998" fill="none" stroke="#333" stroke-opacity="0.5" stroke-width="0.6"/></svg>
<div class="t" style="left:402.79999999999995px;width:300px;text-align:right;top:97.7px;font-size:7.0px;color:#333">-8,7</div>
<div class="t" style="left:402.79999999999995px;width:300px;text-align:right;top:110.34615384615385px;font-size:7.0px;color:#333">-8,0</div>
<div class="t" style="left:402.79999999999995px;width:300px;text-align:right;top:122.99230769230769px;font-size:7.0px;color:#333">-6,0</div>
<div class="t" style="left:402.79999999999995px;width:300px;text-align:right;top:135.6384615384615px;font-size:7.0px;color:#333">-4,0</div>
<div class="t" style="left:402.79999999999995px;width:300px;text-align:right;top:148.28461538461536px;font-size:7.0px;color:#333">-2,0</div>
<div class="t" style="left:402.79999999999995px;width:300px;text-align:right;top:160.93076923076922px;font-size:7.0px;color:#333">0,0</div>
<div class="t" style="left:402.79999999999995px;width:300px;text-align:right;top:173.57692307692304px;font-size:7.0px;color:#333">2,0</div>
<div class="t" style="left:402.79999999999995px;width:300px;text-align:right;top:186.2230769230769px;font-size:7.0px;color:#333">4,0</div>
<div class="t" style="left:402.79999999999995px;width:300px;text-align:right;top:198.86923076923074px;font-size:7.0px;color:#333">6,0</div>
<div class="t" style="left:402.79999999999995px;width:300px;text-align:right;top:211.5153846153846px;font-size:7.0px;color:#333">8,0</div>
<div class="t" style="left:402.79999999999995px;width:300px;text-align:right;top:224.16153846153844px;font-size:7.0px;color:#333">10,0</div>
<div class="t" style="left:402.79999999999995px;width:300px;text-align:right;top:236.80769230769226px;font-size:7.0px;color:#333">12,0</div>
<div class="t" style="left:402.79999999999995px;width:300px;text-align:right;top:249.45384615384611px;font-size:7.0px;color:#333">14,0</div>
<div class="t" style="left:402.79999999999995px;width:300px;text-align:right;top:262.09999999999997px;font-size:7.0px;color:#333">14,9</div>
<div class="a" style="left:626.5px;top:469px;width:81.5px;height:14.5px;background:#fff;"></div>
<div class="t" style="left:629.4px;top:472.7px;font-size:7.8px;">Uniform</div>
<div class="a" style="left:698.7px;top:475.0px;width:0;height:0;border-left:3.0px solid transparent;border-right:3.0px solid transparent;border-top:3.0px solid #111"></div>
<svg class="a" style="left:635px;top:487px;" width="13" height="12" viewBox="0 0 13 12"><path d="M2 10.5L7.5 5" stroke="#1c2cb0" stroke-width="2.2" stroke-linecap="round"/><path d="M6.5 5.5A3 3 0 0 1 11 1.5L9 3.5L10 4.5L12 2.5A3 3 0 0 1 8 6.5Z" fill="#1c2cb0"/></svg>
<svg class="a" style="left:662px;top:487px;" width="12" height="12" viewBox="0 0 12 12"><path d="M6 1.5V10.5M1.5 6H10.5" stroke="#2ea82e" stroke-width="3"/></svg>
<svg class="a" style="left:688.5px;top:487px;" width="13" height="13" viewBox="0 0 13 13"><rect x="0.5" y="0.5" width="12" height="12" fill="#e4e4e4" stroke="#999"/><path d="M3 10.5L7 6.5" stroke="#2030d0" stroke-width="1.6" stroke-linecap="round"/><path d="M6.5 6.5A2.2 2.2 0 0 1 9.5 3L8.5 4.3L9.2 5L10.3 4A2.2 2.2 0 0 1 7.2 7.2Z" fill="#2030d0"/></svg>
<div class="t" style="left:628.8px;top:504.09999999999997px;font-size:7.8px;color:#222;">&lt;-8,7 mm ..</div>
<div class="t" style="left:406.70000000000005px;width:300px;text-align:right;top:516.0px;font-size:7.8px;color:#222">.. 14,9 mm&gt;</div>
<div class="a" style="left:708.5px;top:74px;width:1px;height:626px;background:#9a9a9a;"></div>
<div class="a" style="left:710.6px;top:76.5px;width:82.6px;height:11.2px;background:#d9d9d9;"></div>
<div class="t" style="left:713px;top:78.3px;font-size:7.8px;color:#222;">Frames</div>
<div class="a" style="left:785px;top:84px;width:5px;height:1.6px;background:#222;"></div>
<div class="a" style="left:713px;top:143.4px;width:77px;height:1px;background:#d8d8d8;"></div>
<div class="a" style="left:713px;top:162.5px;width:77px;height:1px;background:#d8d8d8;"></div>
<div class="a" style="left:713px;top:182.3px;width:77px;height:1px;background:#d8d8d8;"></div>
<div class="a" style="left:713px;top:252.7px;width:77px;height:1px;background:#d8d8d8;"></div>
<div class="a" style="left:713px;top:372.9px;width:77px;height:1px;background:#d8d8d8;"></div>
<div class="a" style="left:713.6px;top:410.6px;width:77px;height:17px;background:#cce4f7;border:1px solid #99c9ef"></div>
<div class="t" style="left:730.5px;top:96.2px;font-size:7.8px;color:#222;">Excavation</div>
<svg class="a" style="left:718px;top:95.5px;" width="10" height="10" viewBox="0 0 10 10"><rect x="0.5" y="0.5" width="9.5" height="9.5" fill="#e8dc20" stroke="#222" stroke-width="1"/><rect x="0.5" y="0.5" width="9.5" height="9.5" fill="none" stroke="#f8f060" stroke-width="0.6" stroke-dasharray="1 1"/><circle cx="5.25" cy="5.25" r="3" fill="#8a8a8a" stroke="#555" stroke-width="0.5"/></svg>
<div class="t" style="left:730.5px;top:113.60000000000001px;font-size:7.8px;color:#222;">Activity</div>
<svg class="a" style="left:718px;top:112.9px;" width="10" height="10" viewBox="0 0 10 10"><rect x="0" y="0" width="6" height="6" fill="#18d018"/><rect x="4" y="4" width="6" height="6" fill="#f01818"/></svg>
<div class="t" style="left:730.5px;top:130.2px;font-size:7.8px;color:#222;">Assign</div>
<svg class="a" style="left:718px;top:129.5px;" width="10" height="10" viewBox="0 0 10 10"><rect x="1" y="0" width="8.5" height="10.5" fill="#123838" stroke="#0a2020" stroke-width="0.6"/><path d="M2 5.5L3.5 4L5 5.5L6.5 4L8.5 5.5V7H2Z" fill="#e8d020"/><path d="M2 8.3H8.5" stroke="#30d0d0" stroke-width="1"/></svg>
<div class="t" style="left:730.5px;top:149.79999999999998px;font-size:7.8px;color:#222;">Lining</div>
<svg class="a" style="left:718px;top:149.1px;" width="10" height="10" viewBox="0 0 10 10"><ellipse cx="5" cy="5" rx="4" ry="3.8" fill="none" stroke="#1a8a1a" stroke-width="1.8"/></svg>
<div class="t" style="left:730.5px;top:169.2px;font-size:7.8px;color:#222;">Water</div>
<svg class="a" style="left:718px;top:168.5px;" width="10" height="10" viewBox="0 0 10 10"><path d="M0 0.8H10" stroke="#b03030" stroke-width="0.7"/><path d="M0 2.8H10" stroke="#3030a0" stroke-width="0.6" stroke-dasharray="1 0.6"/><rect x="0" y="4" width="10" height="6" fill="#00e8ff"/></svg>
<div class="t" style="left:730.5px;top:188.79999999999998px;font-size:7.8px;color:#222;">Beams</div>
<svg class="a" style="left:718px;top:188.1px;" width="10" height="10" viewBox="0 0 10 10"><path d="M1 8V4H9V8" fill="none" stroke="#202020" stroke-width="1.2"/><rect x="1.5" y="3.5" width="7" height="2.5" fill="#c020c0"/></svg>
<div class="t" style="left:730.5px;top:205.5px;font-size:7.8px;color:#222;">Contacts</div>
<svg class="a" style="left:718px;top:204.8px;" width="10" height="10" viewBox="0 0 10 10"><rect x="0" y="3" width="10" height="4.5" fill="#e8e020"/><path d="M0 4.5H10M0 6H10" stroke="#808020" stroke-width="0.6" stroke-dasharray="1 0.7"/></svg>
<div class="t" style="left:730.5px;top:222.39999999999998px;font-size:7.8px;color:#222;">Point supports</div>
<svg class="a" style="left:718px;top:221.7px;" width="10" height="10" viewBox="0 0 10 10"><path d="M2 1L5 5L8 1" stroke="#888" fill="none" stroke-width="0.8"/><path d="M3 9L5 5L7 9Z" fill="#c020c0"/><path d="M2 9.5H8" stroke="#333"/></svg>
<div class="t" style="left:730.5px;top:239.1px;font-size:7.8px;color:#222;">Line supports</div>
<svg class="a" style="left:718px;top:238.4px;" width="10" height="10" viewBox="0 0 10 10"><path d="M0.5 9.5L9.5 1.5" stroke="#333" stroke-width="1.2"/><path d="M2 8L5 5L7 6L4 9Z" fill="#c020c0"/></svg>
<div class="t" style="left:730.5px;top:258.9px;font-size:7.8px;color:#222;">Anchors</div>
<svg class="a" style="left:718px;top:258.2px;" width="10" height="10" viewBox="0 0 10 10"><path d="M0.5 9L9 1M3 8L9.5 4M4 9.5L9.5 7" stroke="#2040e0" stroke-width="1.1"/><path d="M0.5 9.5L4 7" stroke="#e02020" stroke-width="1.2"/></svg>
<div class="t" style="left:730.5px;top:275.59999999999997px;font-size:7.8px;color:#222;">Nails</div>
<svg class="a" style="left:718px;top:274.9px;" width="10" height="10" viewBox="0 0 10 10"><path d="M3 1H9M2.5 3.5H9M2 6H9M1.5 8.5H9" stroke="#e020e0" stroke-width="1.1"/><path d="M1 10L4 0.5" stroke="#802080" stroke-width="1"/></svg>
<div class="t" style="left:730.5px;top:292.8px;font-size:7.8px;color:#222;">Props</div>
<svg class="a" style="left:718px;top:292.1px;" width="10" height="10" viewBox="0 0 10 10"><path d="M0.5 3H7M0.5 7H7" stroke="#e020c0" stroke-width="1.5"/><path d="M7 1V9" stroke="#602020" stroke-width="1.2"/><path d="M7 1H10" stroke="#602020"/></svg>
<div class="t" style="left:730.5px;top:309.2px;font-size:7.8px;color:#222;">Reinforcements</div>
<svg class="a" style="left:718px;top:308.5px;" width="10" height="10" viewBox="0 0 10 10"><path d="M4 1H9.5M3 4H9.5M2 7H9.5" stroke="#f030d0" stroke-width="1.1"/><path d="M0.5 9.5L5 1" stroke="#c04060" stroke-width="1"/></svg>
<div class="t" style="left:730.5px;top:325.9px;font-size:7.8px;color:#222;">Surcharge</div>
<svg class="a" style="left:718px;top:325.2px;" width="10" height="10" viewBox="0 0 10 10"><rect x="2" y="1" width="6" height="3" fill="#2030d0"/><rect x="0.5" y="4" width="9" height="5.5" fill="#fff" stroke="#a04040" stroke-width="0.8"/></svg>
<div class="t" style="left:730.5px;top:343.3px;font-size:7.8px;color:#222;">Beam loads</div>
<svg class="a" style="left:718px;top:342.6px;" width="10" height="10" viewBox="0 0 10 10"><rect x="1.5" y="1" width="7" height="3.5" fill="#2030d0"/><path d="M1 8V5H9V8" fill="none" stroke="#2030a0" stroke-width="1.4"/></svg>
<div class="t" style="left:730.5px;top:359.9px;font-size:7.8px;color:#222;">Region loads</div>
<svg class="a" style="left:718px;top:359.2px;" width="10" height="10" viewBox="0 0 10 10"><rect x="1" y="1" width="8" height="8" fill="#3040d0" stroke="#202060" stroke-width="0.8"/><path d="M0 0L3 3M10 0L7 3M0 10L3 7M10 10L7 7" stroke="#202060"/></svg>
<div class="t" style="left:730.5px;top:379.59999999999997px;font-size:7.8px;color:#222;">Elastic regions</div>
<svg class="a" style="left:718px;top:378.9px;" width="10" height="10" viewBox="0 0 10 10"><path d="M1 1H9M1 3H9" stroke="#333" stroke-width="0.9"/><rect x="2" y="4" width="6" height="4" fill="#e020e0"/><path d="M5 8V10M2 10H8" stroke="#333"/></svg>
<div class="t" style="left:730.5px;top:396.2px;font-size:7.8px;color:#222;">Earthquake</div>
<svg class="a" style="left:718px;top:395.5px;" width="10" height="10" viewBox="0 0 10 10"><rect x="3" y="0.5" width="4" height="6" fill="#506050"/><path d="M1 7L3 10M4 7L2 10M6 7L8 10M9 7L7 10" stroke="#20a020" stroke-width="0.9"/><path d="M2 6H8" stroke="#333"/></svg>
<div class="t" style="left:730.5px;top:415.59999999999997px;font-size:7.8px;color:#222;">Analysis</div>
<svg class="a" style="left:718px;top:414.9px;" width="10" height="10" viewBox="0 0 10 10"><rect x="0" y="2" width="10" height="8" fill="#f0e818"/><path d="M0 2.2Q2.5 0 5 2.2T10 2.2V3.5H0Z" fill="#e82020"/><path d="M0 5.5Q2.5 4 5 5.5T10 5.5M0 8.3Q2.5 6.8 5 8.3T10 8.3" fill="none" stroke="#1a1a1a" stroke-width="1" stroke-dasharray="1.3 0.6"/></svg>
<div class="t" style="left:730.5px;top:432.8px;font-size:7.8px;color:#222;">Monitors</div>
<svg class="a" style="left:718px;top:432.1px;" width="10" height="10" viewBox="0 0 10 10"><circle cx="3" cy="3.5" r="2.8" fill="#e02020"/><rect x="5" y="1" width="4.5" height="9" fill="#a08030" stroke="#404020" stroke-width="0.7"/></svg>
<div class="t" style="left:730.5px;top:449.59999999999997px;font-size:7.8px;color:#222;">Graphs</div>
<svg class="a" style="left:718px;top:448.9px;" width="10" height="10" viewBox="0 0 10 10"><rect x="0.5" y="0.5" width="9" height="9" fill="#f8d020" stroke="#604010" stroke-width="0.9"/><path d="M1 9L9 2" stroke="#e02020" stroke-width="1.2"/><path d="M1 5H9M1 7H9" stroke="#604010" stroke-width="0.5"/></svg>
<div class="t" style="left:730.5px;top:466.2px;font-size:7.8px;color:#222;">Stability</div>
<svg class="a" style="left:718px;top:465.5px;" width="10" height="10" viewBox="0 0 10 10"><path d="M0.5 8C3 10.5 8 9 9.5 2.5C7 5 4 6.5 0.5 8Z" fill="#e02020"/><path d="M9.5 2.5L9 0.5" stroke="#208020" stroke-width="1.2"/><path d="M1.5 7.5C4 7 6.5 5.5 9 3" stroke="#f0a020" stroke-width="0.8" fill="none"/></svg>
<div class="a" style="left:0px;top:524.3px;width:709px;height:1.6px;background:#9a9a9a;"></div>
<div class="a" style="left:2.8px;top:530.6px;width:11.2px;height:169.4px;background:#d4d4d4;"></div>
<div class="a" style="left:7.5px;top:537px;width:1.5px;height:5px;background:#222;"></div>
<div class="vt" style="left:4.199999999999999px;top:695px;font-size:7.8px;color:#222">Analysis</div>
<div class="a" style="left:18px;top:535px;width:84.5px;height:37.8px;background:#e1e1e1;border:1px solid #3c88d8"></div>
<div class="a" style="left:18.5px;top:535.5px;width:6.5px;height:36.8px;background:#14b414;"></div>
<svg class="a" style="left:52px;top:537px;" width="22" height="21" viewBox="0 0 22 21"><rect x="2.5" y="2" width="14" height="14" fill="#1e1e1e"/><path d="M1 4V14M18 4V14M4.5 0.8H14.5M4.5 17.2H14.5" stroke="#555" stroke-width="1"/><rect x="5" y="4.5" width="9" height="9" fill="none" stroke="#d8d8d8" stroke-width="0.9"/><rect x="7" y="6.5" width="5" height="5" fill="none" stroke="#999" stroke-width="0.8"/><circle cx="15.5" cy="15" r="5.2" fill="#12a812" stroke="#fff" stroke-width="0.9"/><path d="M13.8 12.3V17.7L18.2 15Z" fill="#fff"/></svg>
<div class="t" style="left:-37px;width:200px;text-align:center;top:561.1px;font-size:7.8px;color:#222"><u>A</u>nalyze</div>
<div class="a" style="left:18px;top:577.6px;width:84.5px;height:16.199999999999932px;background:#e1e1e1;border:1px solid #d6d6d6"></div>
<svg class="a" style="left:22px;top:580.5px;" width="8" height="11" viewBox="0 0 8 11"><path d="M5.5 0.5L1 6H4L2.5 10.5L7 4.5H4Z" fill="#1a9a1a"/></svg>
<div class="t" style="left:33.8px;top:581.7px;font-size:7.8px;color:#222;">Settings</div>
<div class="a" style="left:18px;top:598.4px;width:84.5px;height:16.700000000000045px;background:#e1e1e1;border:1px solid #d6d6d6"></div>
<svg class="a" style="left:22px;top:601.8px;" width="8" height="11" viewBox="0 0 8 11"><path d="M5.5 0.5L1 6H4L2.5 10.5L7 4.5H4Z" fill="#1a9a1a"/></svg>
<div class="t" style="left:33.8px;top:603.0px;font-size:7.8px;color:#222;">Course of analysis</div>
<div class="a" style="left:113px;top:540.9px;width:7px;height:1px;background:#d8d8d8;"></div>
<div class="t" style="left:122.5px;top:536.7px;font-size:7.8px;color:#222;">Earthquake Analysis</div>
<div class="a" style="left:196.8px;top:540.9px;width:123px;height:1px;background:#d8d8d8;"></div>
<div class="a" style="left:113.9px;top:554.5px;width:9.5px;height:9.5px;background:#fff;border:1px solid #d2d2d2"></div>
<div class="t" style="left:126.9px;top:554.5px;font-size:7.8px;color:#222;">Break calculation after Eigenvalue analysis</div>
<div class="t" style="left:113px;top:572.7px;font-size:7.8px;color:#222;">Damping :</div>
<div class="combo" style="left:171.7px;top:569px;width:147.5px;height:14px;border-color:#d9d9d9"></div>
<div class="t" style="left:173.7px;top:571.7px;font-size:7.8px;color:#222;">Min. damped frequency</div>
<div class="a" style="left:309.4px;top:574.5px;width:0;height:0;border-left:3.0px solid transparent;border-right:3.0px solid transparent;border-top:3.0px solid #111"></div>
<div class="t" style="left:113px;top:590.9000000000001px;font-size:7.8px;color:#222;">Damping :</div>
<div class="combo" style="left:171.7px;top:587px;width:147.5px;height:14.5px;border-color:#d9d9d9"></div>
<div class="t" style="left:173.7px;top:590.0px;font-size:7.8px;color:#222;">Frequency No. 1, ω<span style="font-size:6px;position:relative;top:1px">α</span> = 3,57 rad/s</div>
<div class="a" style="left:309.4px;top:592.8px;width:0;height:0;border-left:3.0px solid transparent;border-right:3.0px solid transparent;border-top:3.0px solid #111"></div>
<div class="a" style="left:325.9px;top:534.8px;width:275.5px;height:163px;background:#fff;"></div>
<div class="t" style="left:329.1px;top:539.5px;font-size:9.55px;color:#1e1e1e;"><span style="color:#0d800d;font-weight:bold;font-size:9.1px">Stress analysis was successfully completed.</span></div>
<div class="t" style="left:329.1px;top:553.1px;font-size:9.55px;color:#1e1e1e;">Analysis settings : <span style="color:#a01818;font-weight:bold;font-size:9.1px">user-defined</span></div>
<div class="t" style="left:329.1px;top:566.3000000000001px;font-size:9.55px;color:#1e1e1e;">Attained loading = 100,00 %</div>
<div class="t" style="left:329.1px;top:580.1px;font-size:9.55px;color:#1e1e1e;"><span style="color:#0d800d;font-weight:bold;font-size:9.1px">Eigenvalue analysis successfully completed.</span></div>
<div class="t" style="left:329.1px;top:593.2px;font-size:9.55px;color:#1e1e1e;">Eigenmodes found 10 of 10 requested.</div>
<div class="t" style="left:329.1px;top:606.8000000000001px;font-size:9.55px;color:#1e1e1e;"><span style="color:#0d800d;font-weight:bold;font-size:9.1px">Free Field analysis successfully completed.</span></div>
<div class="t" style="left:329.1px;top:620.7px;font-size:9.55px;color:#1e1e1e;"><span style="color:#0d800d;font-weight:bold;font-size:9.1px">Earthquake stress analysis successfully completed.</span></div>
<div class="t" style="left:329.1px;top:640.7px;font-size:9.55px;color:#1e1e1e;"><b style="font-size:9.1px">Eigenmodes</b></div>
<div class="t" style="left:329.1px;top:657.3000000000001px;font-size:9.55px;color:#1e1e1e;">Requested number of eigenmodes :</div>
<div class="t" style="left:329.1px;top:670.9000000000001px;font-size:9.55px;color:#1e1e1e;">Number of eigenmodes found :</div>
<div class="t" style="left:329.1px;top:684.9000000000001px;font-size:9.55px;color:#1e1e1e;">Total mass :</div>
<div class="t" style="left:485.8px;top:657.3000000000001px;font-size:9.55px;color:#1e1e1e;">10</div>
<div class="t" style="left:485.8px;top:670.9000000000001px;font-size:9.55px;color:#1e1e1e;">10</div>
<div class="t" style="left:485.8px;top:684.9000000000001px;font-size:9.55px;color:#1e1e1e;">m = 7826,45 t</div>
<div class="a" style="left:601.3px;top:534.8px;width:12px;height:163px;background:#f0f0f0;"></div>
<div class="a" style="left:602px;top:546px;width:11px;height:52.8px;background:#cdcdcd;"></div>
<svg class="a" style="left:603px;top:537px;" width="9" height="6" viewBox="0 0 9 6"><path d="M1 5L4.5 1.5L8 5Z" fill="#606060"/></svg>
<svg class="a" style="left:603px;top:684px;" width="9" height="6" viewBox="0 0 9 6"><path d="M1 1L4.5 4.5L8 1Z" fill="#606060"/></svg>
<div class="a" style="left:616.3px;top:531px;width:12.5px;height:166.5px;background:#d4d4d4;"></div>
<div class="a" style="left:623.8px;top:535px;width:1.5px;height:5px;background:#222;"></div>
<div class="vt" style="left:618px;top:695px;font-size:7.8px;color:#222">GeoClipboard™</div>
<svg class="a" style="left:632px;top:535px;" width="11" height="11" viewBox="0 0 11 11"><rect x="0.5" y="0.5" width="6" height="7" fill="#fff" stroke="#333" stroke-width="0.8"/><rect x="3.5" y="3.5" width="6.5" height="7" fill="#fff" stroke="#333" stroke-width="0.8"/><path d="M5 6H9M5 8H9" stroke="#555" stroke-width="0.6"/></svg>
<div class="t" style="left:644.5px;top:537.45px;font-size:7.8px;font-weight:bold;color:#111;">Copy</div>
<div class="a" style="left:632.5px;top:548.75px;width:72px;height:16.25px;background:#dedede;"></div>
<svg class="a" style="left:638px;top:553px;" width="6" height="9" viewBox="0 0 6 9"><path d="M1 1L5 4.5L1 8Z" fill="#555"/></svg>
<div class="t" style="left:648.75px;top:553.2px;font-size:7.8px;color:#222;">analyzed GWT</div>
<div class="a" style="left:711.3px;top:535px;width:82px;height:11.2px;background:#d9d9d9;"></div>
<div class="t" style="left:713px;top:536.45px;font-size:7.8px;color:#222;">Outputs</div>
<div class="a" style="left:785px;top:542.5px;width:5px;height:1.6px;background:#222;"></div>
<div class="a" style="left:713.75px;top:548.75px;width:76.75px;height:17.5px;background:#e1e1e1;border:1px solid #d6d6d6"></div>
<svg class="a" style="left:717px;top:551.5px;" width="12" height="12" viewBox="0 0 12 12"><rect x="0.5" y="0.5" width="10" height="10" fill="#fff" stroke="#333" stroke-width="0.9"/><path d="M3 2V9M3 5H6L7 7L6 9H3" fill="none" stroke="#333" stroke-width="0.8"/><path d="M8.5 1V5M6.5 3H10.5" stroke="#20a020" stroke-width="1.5"/></svg>
<div class="t" style="left:730.5px;top:553.2px;font-size:7.8px;color:#222;">Add Picture</div>
<div class="t" style="left:714px;top:570.7px;font-size:7.8px;color:#222;">Analysis :</div>
<div class="t" style="left:491.5px;width:300px;text-align:right;top:570.7px;font-size:7.8px;color:#222">0</div>
<div class="t" style="left:714px;top:584.45px;font-size:7.8px;color:#222;">Total :</div>
<div class="t" style="left:491.5px;width:300px;text-align:right;top:584.45px;font-size:7.8px;color:#222">0</div>
<div class="a" style="left:713.75px;top:596.25px;width:76.75px;height:16.25px;background:#e1e1e1;border:1px solid #d6d6d6"></div>
<svg class="a" style="left:717px;top:598.375px;" width="12" height="12" viewBox="0 0 12 12"><rect x="0.5" y="0.5" width="10" height="10" fill="#fff" stroke="#333" stroke-width="0.9"/><path d="M3 2V9M3 5H6L7 7L6 9H3" fill="none" stroke="#333" stroke-width="0.8"/><path d="M8 2V4M9.5 2V4" stroke="#333" stroke-width="0.6"/></svg>
<div class="t" style="left:730.5px;top:600.075px;font-size:7.8px;color:#222;">List of Pictures</div>
<div class="a" style="left:713px;top:616.25px;width:77px;height:1px;background:#d8d8d8;"></div>
<div class="a" style="left:713.75px;top:620px;width:76.75px;height:17.5px;background:#e1e1e1;border:1px solid #d6d6d6"></div>
<svg class="a" style="left:717px;top:622.75px;" width="12" height="12" viewBox="0 0 12 12"><rect x="0.5" y="1.5" width="10" height="9" fill="#e0e0e0" stroke="#333" stroke-width="0.9"/><path d="M3.5 1.5V10.5M7 1.5V10.5" stroke="#333" stroke-width="0.9"/></svg>
<div class="t" style="left:730.5px;top:624.45px;font-size:7.8px;color:#222;">List of Annexes</div>
<div class="a" style="left:713px;top:641px;width:77px;height:1px;background:#d8d8d8;"></div>
<div class="a" style="left:714px;top:644.5px;width:36px;height:30px;background:#dcdcdc;"></div>
<div class="a" style="left:754px;top:644.5px;width:36.5px;height:30px;background:#dcdcdc;"></div>
<svg class="a" style="left:722px;top:650px;" width="20" height="21" viewBox="0 0 20 21"><rect x="4" y="0.5" width="12" height="5" fill="#fff" stroke="#333" stroke-width="0.9"/><path d="M0.8 5.5Q0.8 4 2.3 4H17.7Q19.2 4 19.2 5.5V13H0.8Z" fill="#b89a62" stroke="#2e2616" stroke-width="1.1"/><rect x="2.5" y="6" width="15" height="2.2" fill="#e6d6a8"/><rect x="4.5" y="9" width="11" height="11" fill="#fff" stroke="#333" stroke-width="0.9"/><path d="M6.5 12H13.5M6.5 14.2H13.5M6.5 16.4H13.5" stroke="#555" stroke-width="0.9"/><rect x="6.5" y="17.5" width="4" height="1.5" fill="#555"/></svg>
<svg class="a" style="left:762px;top:650px;" width="20" height="21" viewBox="0 0 20 21"><rect x="4" y="0.5" width="12" height="5" fill="#fff" stroke="#333" stroke-width="0.9"/><path d="M0.8 5.5Q0.8 4 2.3 4H17.7Q19.2 4 19.2 5.5V13H0.8Z" fill="#b89a62" stroke="#2e2616" stroke-width="1.1"/><rect x="2.5" y="6" width="15" height="2.2" fill="#e6d6a8"/><rect x="4.5" y="9" width="11" height="11" fill="#fff" stroke="#333" stroke-width="0.9"/><rect x="6" y="11" width="8" height="7.5" fill="#e02030"/><path d="M6.5 18L13.5 11.5" stroke="#fff" stroke-width="1"/></svg>
<div class="a" style="left:713.75px;top:677px;width:76.75px;height:16.75px;background:#e1e1e1;border:1px solid #d6d6d6"></div>
<svg class="a" style="left:717px;top:679.375px;" width="12" height="12" viewBox="0 0 12 12"><rect x="0.5" y="0.5" width="6" height="6" fill="#fff" stroke="#444" stroke-width="0.8"/><rect x="5.5" y="5.5" width="5" height="5" fill="#888" stroke="#333" stroke-width="0.8"/><path d="M7 2V4" stroke="#20a020" stroke-width="1.2"/></svg>
<div class="t" style="left:730.5px;top:681.075px;font-size:7.8px;color:#222;">Copy view</div>
<div class="a" style="left:0px;top:698px;width:796px;height:1px;background:#fafafa;"></div>
<div class="a" style="left:0px;top:699px;width:796px;height:1px;background:#a8a8a8;"></div>
</body></html>
